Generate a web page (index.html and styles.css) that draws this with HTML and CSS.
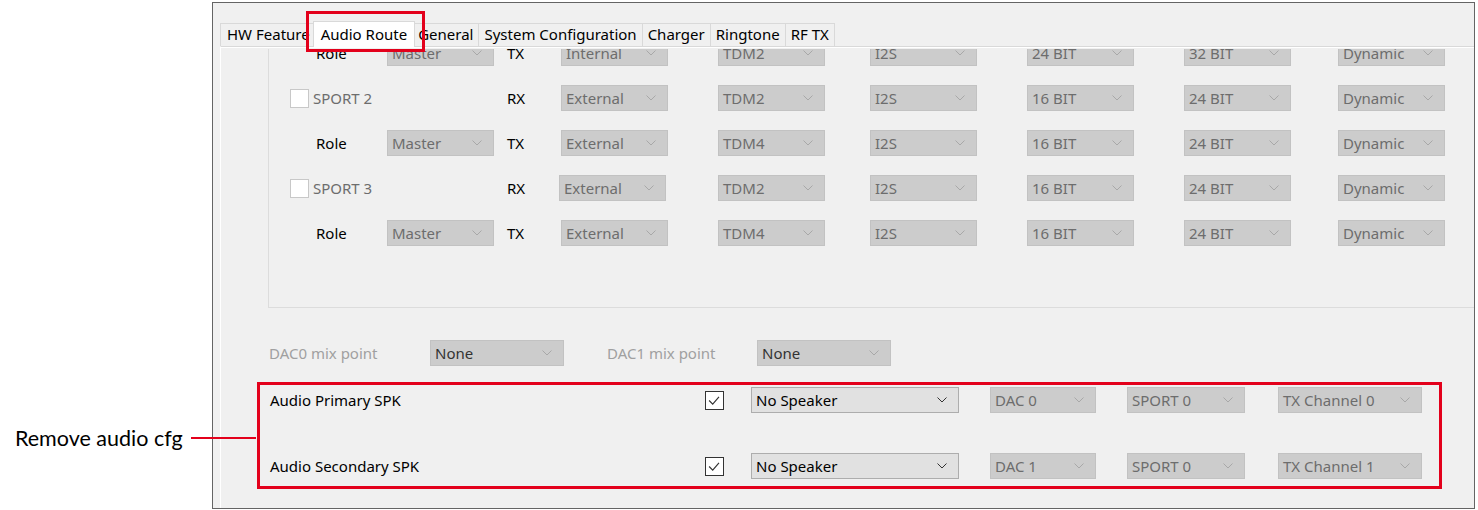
FILE: index.html
```html
<!DOCTYPE html>
<html lang="en">
<head>
<meta charset="UTF-8" />
<title>Audio Route</title>
<link rel="stylesheet" href="styles.css">
</head>
<body>

<div class="callout">
  <span class="callout-text">Remove audio cfg</span>
  <span class="callout-line"></span>
</div>
<div class="tab-mark"></div>

<div class="window">
  <div class="tabs">
    <div class="tab">HW Feature</div>
    <div class="tab active">Audio Route</div>
    <div class="tab">General</div>
    <div class="tab">System Configuration</div>
    <div class="tab">Charger</div>
    <div class="tab">Ringtone</div>
    <div class="tab">RF TX</div>
  </div>

  <div class="panel">
    <div class="scroll">
      <div class="group">
        <div class="row">
          <span class="lbl role">Role</span>
          <div class="combo">Master<svg class="chev" viewBox="0 0 10 6"><polyline points="0.5,0.5 5,5 9.5,0.5"/></svg></div>
          <span class="lbl">TX</span>
          <div class="combo">Internal<svg class="chev" viewBox="0 0 10 6"><polyline points="0.5,0.5 5,5 9.5,0.5"/></svg></div>
          <div class="combo">TDM2<svg class="chev" viewBox="0 0 10 6"><polyline points="0.5,0.5 5,5 9.5,0.5"/></svg></div>
          <div class="combo">I2S<svg class="chev" viewBox="0 0 10 6"><polyline points="0.5,0.5 5,5 9.5,0.5"/></svg></div>
          <div class="combo">24 BIT<svg class="chev" viewBox="0 0 10 6"><polyline points="0.5,0.5 5,5 9.5,0.5"/></svg></div>
          <div class="combo">32 BIT<svg class="chev" viewBox="0 0 10 6"><polyline points="0.5,0.5 5,5 9.5,0.5"/></svg></div>
          <div class="combo">Dynamic<svg class="chev" viewBox="0 0 10 6"><polyline points="0.5,0.5 5,5 9.5,0.5"/></svg></div>
        </div>

        <div class="row">
          <span class="port"><span class="check"></span>SPORT 2</span>
          <span></span>
          <span class="lbl">RX</span>
          <div class="combo">External<svg class="chev" viewBox="0 0 10 6"><polyline points="0.5,0.5 5,5 9.5,0.5"/></svg></div>
          <div class="combo">TDM2<svg class="chev" viewBox="0 0 10 6"><polyline points="0.5,0.5 5,5 9.5,0.5"/></svg></div>
          <div class="combo">I2S<svg class="chev" viewBox="0 0 10 6"><polyline points="0.5,0.5 5,5 9.5,0.5"/></svg></div>
          <div class="combo">16 BIT<svg class="chev" viewBox="0 0 10 6"><polyline points="0.5,0.5 5,5 9.5,0.5"/></svg></div>
          <div class="combo">24 BIT<svg class="chev" viewBox="0 0 10 6"><polyline points="0.5,0.5 5,5 9.5,0.5"/></svg></div>
          <div class="combo">Dynamic<svg class="chev" viewBox="0 0 10 6"><polyline points="0.5,0.5 5,5 9.5,0.5"/></svg></div>
        </div>

        <div class="row">
          <span class="lbl role">Role</span>
          <div class="combo">Master<svg class="chev" viewBox="0 0 10 6"><polyline points="0.5,0.5 5,5 9.5,0.5"/></svg></div>
          <span class="lbl">TX</span>
          <div class="combo">External<svg class="chev" viewBox="0 0 10 6"><polyline points="0.5,0.5 5,5 9.5,0.5"/></svg></div>
          <div class="combo">TDM4<svg class="chev" viewBox="0 0 10 6"><polyline points="0.5,0.5 5,5 9.5,0.5"/></svg></div>
          <div class="combo">I2S<svg class="chev" viewBox="0 0 10 6"><polyline points="0.5,0.5 5,5 9.5,0.5"/></svg></div>
          <div class="combo">16 BIT<svg class="chev" viewBox="0 0 10 6"><polyline points="0.5,0.5 5,5 9.5,0.5"/></svg></div>
          <div class="combo">24 BIT<svg class="chev" viewBox="0 0 10 6"><polyline points="0.5,0.5 5,5 9.5,0.5"/></svg></div>
          <div class="combo">Dynamic<svg class="chev" viewBox="0 0 10 6"><polyline points="0.5,0.5 5,5 9.5,0.5"/></svg></div>
        </div>

        <div class="row">
          <span class="port"><span class="check"></span>SPORT 3</span>
          <span></span>
          <span class="lbl">RX</span>
          <div class="combo shift">External<svg class="chev" viewBox="0 0 10 6"><polyline points="0.5,0.5 5,5 9.5,0.5"/></svg></div>
          <div class="combo">TDM2<svg class="chev" viewBox="0 0 10 6"><polyline points="0.5,0.5 5,5 9.5,0.5"/></svg></div>
          <div class="combo">I2S<svg class="chev" viewBox="0 0 10 6"><polyline points="0.5,0.5 5,5 9.5,0.5"/></svg></div>
          <div class="combo">16 BIT<svg class="chev" viewBox="0 0 10 6"><polyline points="0.5,0.5 5,5 9.5,0.5"/></svg></div>
          <div class="combo">24 BIT<svg class="chev" viewBox="0 0 10 6"><polyline points="0.5,0.5 5,5 9.5,0.5"/></svg></div>
          <div class="combo">Dynamic<svg class="chev" viewBox="0 0 10 6"><polyline points="0.5,0.5 5,5 9.5,0.5"/></svg></div>
        </div>

        <div class="row">
          <span class="lbl role">Role</span>
          <div class="combo">Master<svg class="chev" viewBox="0 0 10 6"><polyline points="0.5,0.5 5,5 9.5,0.5"/></svg></div>
          <span class="lbl">TX</span>
          <div class="combo">External<svg class="chev" viewBox="0 0 10 6"><polyline points="0.5,0.5 5,5 9.5,0.5"/></svg></div>
          <div class="combo">TDM4<svg class="chev" viewBox="0 0 10 6"><polyline points="0.5,0.5 5,5 9.5,0.5"/></svg></div>
          <div class="combo">I2S<svg class="chev" viewBox="0 0 10 6"><polyline points="0.5,0.5 5,5 9.5,0.5"/></svg></div>
          <div class="combo">16 BIT<svg class="chev" viewBox="0 0 10 6"><polyline points="0.5,0.5 5,5 9.5,0.5"/></svg></div>
          <div class="combo">24 BIT<svg class="chev" viewBox="0 0 10 6"><polyline points="0.5,0.5 5,5 9.5,0.5"/></svg></div>
          <div class="combo">Dynamic<svg class="chev" viewBox="0 0 10 6"><polyline points="0.5,0.5 5,5 9.5,0.5"/></svg></div>
        </div>
      </div>

      <div class="mix-row">
        <span class="mix-lbl">DAC0 mix point</span>
        <div class="combo mix dark">None<svg class="chev" viewBox="0 0 10 6"><polyline points="0.5,0.5 5,5 9.5,0.5"/></svg></div>
        <span class="mix-lbl">DAC1 mix point</span>
        <div class="combo mix dark">None<svg class="chev" viewBox="0 0 10 6"><polyline points="0.5,0.5 5,5 9.5,0.5"/></svg></div>
      </div>

      <div class="spk-box">
        <div class="spk-row">
          <span class="spk-lbl">Audio Primary SPK</span>
          <span class="check on"><svg viewBox="0 0 19 19"><polyline points="3.5,9.5 7.5,13.5 14.5,5.5"/></svg></span>
          <div class="combo on spk">No Speaker<svg class="chev" viewBox="0 0 10 6"><polyline points="0.5,0.5 5,5 9.5,0.5"/></svg></div>
          <div class="combo dac">DAC 0<svg class="chev" viewBox="0 0 10 6"><polyline points="0.5,0.5 5,5 9.5,0.5"/></svg></div>
          <div class="combo sport">SPORT 0<svg class="chev" viewBox="0 0 10 6"><polyline points="0.5,0.5 5,5 9.5,0.5"/></svg></div>
          <div class="combo chan">TX Channel 0<svg class="chev" viewBox="0 0 10 6"><polyline points="0.5,0.5 5,5 9.5,0.5"/></svg></div>
        </div>
        <div class="spk-row">
          <span class="spk-lbl">Audio Secondary SPK</span>
          <span class="check on"><svg viewBox="0 0 19 19"><polyline points="3.5,9.5 7.5,13.5 14.5,5.5"/></svg></span>
          <div class="combo on spk">No Speaker<svg class="chev" viewBox="0 0 10 6"><polyline points="0.5,0.5 5,5 9.5,0.5"/></svg></div>
          <div class="combo dac">DAC 1<svg class="chev" viewBox="0 0 10 6"><polyline points="0.5,0.5 5,5 9.5,0.5"/></svg></div>
          <div class="combo sport">SPORT 0<svg class="chev" viewBox="0 0 10 6"><polyline points="0.5,0.5 5,5 9.5,0.5"/></svg></div>
          <div class="combo chan">TX Channel 1<svg class="chev" viewBox="0 0 10 6"><polyline points="0.5,0.5 5,5 9.5,0.5"/></svg></div>
        </div>
      </div>
    </div>
  </div>
</div>

</body>
</html>
```

FILE: styles.css
```css
body {
  margin: 0;
  background: #fff;
  font-family: "Noto Sans", Arial, sans-serif;
  font-size: 15px;
  color: #000;
  position: relative;
}

.window {
  box-sizing: border-box;
  width: 1263px;
  height: 507px;
  margin: 2px 0 0 212px;
  border: 1px solid #646464;
  background: #f0f0f0;
  overflow: hidden;
}

/* tab strip */
.tabs {
  display: flex;
  align-items: flex-end;
  height: 43px;
  padding-left: 8px;
}

.tab {
  box-sizing: border-box;
  height: 23px;
  padding: 0 5px;
  margin-left: -1px;
  border: 1px solid #d9d9d9;
  border-bottom: none;
  background: #f0f0f0;
  line-height: 21px;
  white-space: nowrap;
}

.tab:first-child {
  padding-left: 6px;
}

.tab.active {
  position: relative;
  z-index: 1;
  height: 26px;
  margin: 0 -2px -1px -3px;
  padding: 0 7px;
  background: #fff;
  line-height: 24px;
}

.panel {
  height: 470px;
  margin-left: 7px;
  border-top: 1px solid #d9d9d9;
  border-left: 1px solid #fff;
  box-shadow: inset 0 1px #fff;
}

.scroll {
  height: 460px;
  margin-top: 2px;
  overflow: hidden;
}

/* group box with the sport rows */
.group {
  margin: -32px 0 0 47px;
  padding: 22px 0 61px 21px;
  border: 1px solid #dcdcdc;
  border-right: none;
  display: flex;
  flex-direction: column;
  gap: 19px;
}

.row {
  display: grid;
  grid-template-columns: 97px 120px 54px 157px 152px 157px 157px 154px 107px;
  align-items: center;
  height: 26px;
}

.lbl {
  color: #000;
}

.role {
  padding-left: 26px;
}

.port {
  display: flex;
  align-items: center;
  gap: 4px;
  color: #6d6d6d;
}

.check {
  box-sizing: border-box;
  display: inline-block;
  width: 19px;
  height: 19px;
  background: #fff;
  border: 1px solid #c8c8c8;
}

.check.on {
  border-color: #333;
}

.check svg {
  display: block;
  width: 17px;
  height: 17px;
}

.check polyline {
  fill: none;
  stroke: #333;
  stroke-width: 1.3;
}

/* combo boxes */
.combo {
  box-sizing: border-box;
  display: flex;
  align-items: center;
  justify-content: space-between;
  width: 107px;
  height: 26px;
  padding: 0 11px 0 4px;
  background: #cccccc;
  border: 1px solid #c2c2c2;
  color: #6d6d6d;
  white-space: nowrap;
}

.combo.shift {
  margin-left: -2px;
}

.combo.dark {
  color: #333;
}

.combo.on {
  background: #e1e1e1;
  border-color: #adadad;
  color: #000;
}

.chev {
  width: 10px;
  height: 6px;
  flex-shrink: 0;
}

.chev polyline {
  fill: none;
  stroke: #a8a8a8;
  stroke-width: 1;
}

.combo.on .chev polyline {
  stroke: #333;
}

/* mix point row */
.mix-row {
  display: grid;
  grid-template-columns: 161px 177px 150px 134px;
  align-items: center;
  margin-top: 32px;
  padding-left: 48px;
}

.mix-lbl {
  color: #a0a0a0;
}

.combo.mix {
  width: 134px;
}

/* highlighted speaker block */
.spk-box {
  box-sizing: border-box;
  width: 1185px;
  margin: 16px 0 0 36px;
  padding: 2px 0 7px 10px;
  border: 3px solid #e3001b;
  display: flex;
  flex-direction: column;
  gap: 40px;
}

.spk-row {
  display: grid;
  grid-template-columns: 435px 46px 239px 137px 151px 144px;
  align-items: center;
  height: 26px;
}

.combo.spk {
  width: 208px;
}

.combo.dac {
  width: 106px;
}

.combo.sport {
  width: 118px;
}

.combo.chan {
  width: 144px;
}

/* annotations over the screenshot */
.callout {
  position: absolute;
  left: 15px;
  top: 425px;
  display: flex;
  align-items: center;
  gap: 8px;
}

.callout-text {
  font-family: Lato, "Open Sans", sans-serif;
  font-size: 21.5px;
  color: #000;
}

.callout-line {
  width: 65px;
  height: 2px;
  background: #e3001b;
}

.tab-mark {
  position: absolute;
  left: 306px;
  top: 11px;
  width: 119px;
  height: 41px;
  box-sizing: border-box;
  border: 3px solid #e3001b;
  z-index: 5;
}
```
